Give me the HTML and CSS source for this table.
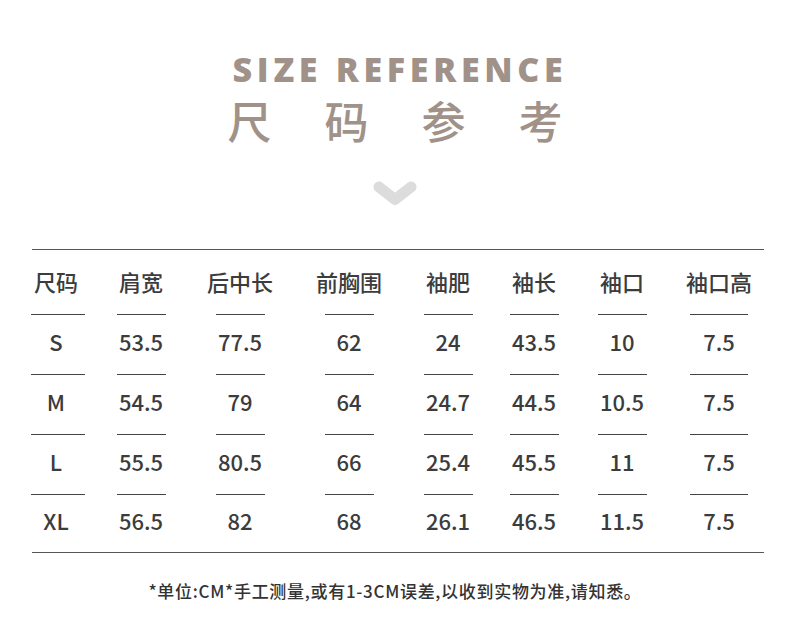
FILE: index.html
```html
<!DOCTYPE html>
<html lang="zh-CN">
<head>
<meta charset="utf-8">
<title>尺码参考</title>
<link rel="stylesheet" href="styles.css">
</head>
<body>
<div class="page">
  <header class="head">
    <h1 class="title-en">SIZE REFERENCE</h1>
    <h2 class="title-cn">尺码参考</h2>
    <svg class="chevron" width="44" height="30" viewBox="0 0 44 30">
      <polyline points="6,6 22,18.5 38,6" fill="none" stroke="#dcdcdc" stroke-width="11" stroke-linecap="round" stroke-linejoin="round"/>
    </svg>
  </header>

  <section class="table">
    <div class="line"></div>
    <div class="grid">
      <div class="cell first">尺码</div><div class="cell">肩宽</div><div class="cell">后中长</div><div class="cell">前胸围</div><div class="cell">袖肥</div><div class="cell">袖长</div><div class="cell">袖口</div><div class="cell wide">袖口高</div>

      <div class="cell first">S</div><div class="cell">53.5</div><div class="cell">77.5</div><div class="cell">62</div><div class="cell">24</div><div class="cell">43.5</div><div class="cell">10</div><div class="cell wide">7.5</div>

      <div class="cell first">M</div><div class="cell">54.5</div><div class="cell">79</div><div class="cell">64</div><div class="cell">24.7</div><div class="cell">44.5</div><div class="cell">10.5</div><div class="cell wide">7.5</div>

      <div class="cell first">L</div><div class="cell">55.5</div><div class="cell">80.5</div><div class="cell">66</div><div class="cell">25.4</div><div class="cell">45.5</div><div class="cell">11</div><div class="cell wide">7.5</div>

      <div class="cell last">XL</div><div class="cell last">56.5</div><div class="cell last">82</div><div class="cell last">68</div><div class="cell last">26.1</div><div class="cell last">46.5</div><div class="cell last">11.5</div><div class="cell last">7.5</div>
    </div>
    <div class="line"></div>
  </section>

  <p class="note">*单位:CM*手工测量,或有1-3CM误差,以收到实物为准,请知悉。</p>
</div>
</body>
</html>
```

FILE: styles.css
```css
html, body {
  margin: 0;
  padding: 0;
  background: #ffffff;
}

.page {
  width: 790px;
  height: 644px;
  padding-top: 49px;
  box-sizing: border-box;
  font-family: "Noto Sans CJK SC", "Noto Sans", sans-serif;
  color: #3a3a3a;
}

.head {
  display: flex;
  flex-direction: column;
  align-items: center;
}

.title-en {
  margin: 0;
  font-family: "Open Sans", "Noto Sans", sans-serif;
  font-weight: 800;
  font-size: 34px;
  line-height: 40px;
  letter-spacing: 4.7px;
  padding-left: 10px;
  color: #a09288;
}

.title-cn {
  margin: 7px 0 0 0;
  font-family: "Noto Sans CJK SC", sans-serif;
  font-weight: 500;
  font-size: 44px;
  line-height: 48px;
  letter-spacing: 53px;
  padding-left: 53px;
  color: #a09288;
}

.chevron {
  display: block;
  margin-top: 37px;
}

.table {
  margin-top: 38px;
}

.line {
  margin: 0 26px 0 32px;
  height: 1px;
  background: #555555;
}

.grid {
  display: grid;
  grid-template-columns: 56px 114px 84px 134px 64px 108px 68px 126px;
  margin: 5px 0 -1px 28px;
}

.cell {
  position: relative;
  height: 60px;
  box-sizing: border-box;
  padding-bottom: 8px;
  display: flex;
  align-items: center;
  justify-content: center;
  font-size: 22px;
  font-weight: 500;
  color: #3c3c3c;
  white-space: nowrap;
}

.cell::after {
  content: "";
  position: absolute;
  left: 50%;
  bottom: 0;
  width: 49px;
  height: 1px;
  margin-left: -24.5px;
  background: #444444;
}

.cell.first::after {
  width: 54px;
  margin-left: -25px;
}

.cell.wide::after {
  width: 58px;
  margin-left: -29px;
}

.cell.last {
  height: 58px;
}

.cell.last::after {
  display: none;
}

.note {
  margin: 27px 0 0 0;
  text-align: center;
  font-family: "Noto Sans CJK SC", sans-serif;
  font-weight: 500;
  font-size: 17px;
  line-height: 22px;
  letter-spacing: 0.7px;
  color: #333333;
}
```
